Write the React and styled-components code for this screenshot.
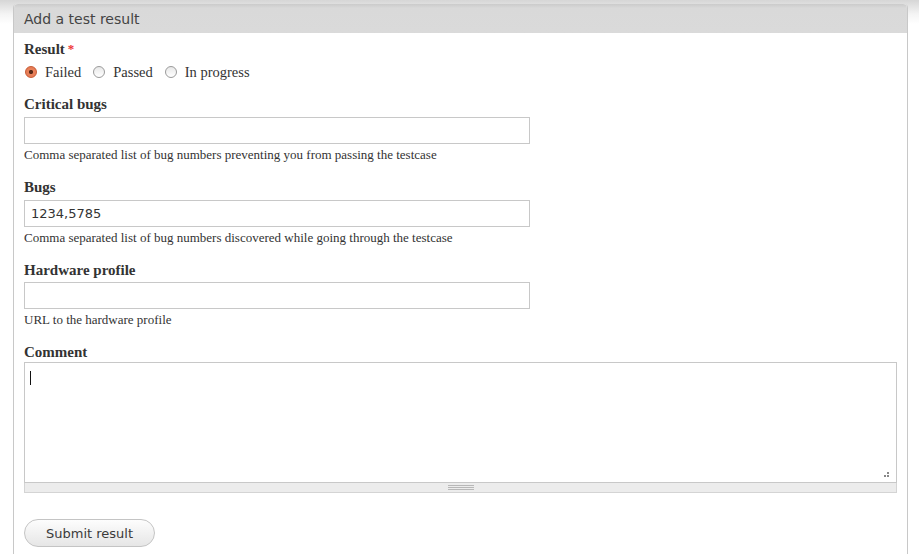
import styled, { createGlobalStyle } from 'styled-components'

const GlobalStyle = createGlobalStyle`
  html, body {
    margin: 0;
    padding: 0;
  }
  body {
    background: linear-gradient(#d6d6d6 0, #f4f4f4 14px, #fff 24px);
    background-repeat: no-repeat;
    background-color: #fff;
    font-family: "Liberation Serif", serif;
    color: #333;
    height: 554px;
    overflow: hidden;
  }
`

const Page = styled.div`
  padding: 4px 0 0 13px;
`

const Panel = styled.div`
  width: 893px;
  border: 1px solid #c8c8c8;
  border-bottom: none;
  border-top: none;
  border-radius: 4px 4px 0 0;
  background: #fff;
  min-height: 560px;
`

const PanelHeader = styled.div`
  height: 29px;
  background: linear-gradient(#cbcbcb 0, #d9d9d9 4px, #dadada 100%);
  border-radius: 4px 4px 0 0;
  padding: 0 10px;
  display: flex;
  align-items: center;
  font-family: "DejaVu Sans", Verdana, sans-serif;
  font-size: 14px;
  color: #444;
`

const Body = styled.div`
  padding: 7px 10px 0 10px;
`

const Item = styled.div`
  margin-bottom: ${p => p.$gap ?? 15}px;
`

const Label = styled.label`
  display: block;
  font-weight: bold;
  font-size: 15px;
  line-height: 18px;
  color: #333;
  margin-bottom: ${p => p.$mb ?? 4}px;
`

const Required = styled.span`
  color: #e33;
  margin-left: 3px;
  font-size: 13px;
  vertical-align: top;
`

const RadioRow = styled.div`
  display: flex;
  align-items: center;
  height: 18px;
  font-size: 14.5px;
`

const RadioOption = styled.span`
  display: flex;
  align-items: center;
  margin-right: 11px;
`

const RadioDot = styled.span`
  width: 12px;
  height: 12px;
  border-radius: 50%;
  margin: 0 8px 0 1px;
  box-sizing: border-box;
  border: 1px solid ${p => (p.$checked ? '#c85a32' : '#9a9a9a')};
  background: ${p =>
    p.$checked
      ? 'radial-gradient(circle, #5a2a18 0, #5a2a18 1.7px, #e9825b 2.5px, #e07550 100%)'
      : 'linear-gradient(#e8e8e8, #fff)'};
`

const TextInput = styled.input`
  display: block;
  box-sizing: border-box;
  width: 506px;
  height: 27px;
  border: 1px solid #c8c8c8;
  padding: 0 6px;
  font-family: "DejaVu Sans", Verdana, sans-serif;
  font-size: 13px;
  color: #333;
  outline: none;
  margin: 0;
`

const Description = styled.div`
  font-size: 13px;
  line-height: 17px;
  color: #333;
  margin-top: 2px;
`

const AreaWrap = styled.div`
  position: relative;
  width: 873px;
`

const TextArea = styled.textarea`
  display: block;
  box-sizing: border-box;
  width: 873px;
  height: 121px;
  border: 1px solid #c8c8c8;
  margin: 0;
  padding: 6px;
  resize: none;
  outline: none;
  font-family: "DejaVu Sans", Verdana, sans-serif;
  font-size: 13px;
  color: #333;
  background: #fff;
`

const Caret = styled.span`
  position: absolute;
  left: 6px;
  top: 9px;
  width: 1px;
  height: 14px;
  background: #111;
`

const ResizeDots = styled.span`
  position: absolute;
  right: 8px;
  bottom: 6px;
  width: 5px;
  height: 5px;
  background:
    radial-gradient(circle, #888 0.8px, transparent 1px) 3px 0 / 2px 2px no-repeat,
    radial-gradient(circle, #888 0.8px, transparent 1px) 0 3px / 2px 2px no-repeat,
    radial-gradient(circle, #888 0.8px, transparent 1px) 3px 3px / 2px 2px no-repeat;
`

const Grippie = styled.div`
  box-sizing: border-box;
  width: 873px;
  height: 10px;
  background: #ececec;
  border: 1px solid #d4d4d4;
  border-top: none;
  display: flex;
  justify-content: center;
  align-items: center;
`

const GripLines = styled.span`
  width: 26px;
  height: 5px;
  border-top: 1px solid #b8b8b8;
  border-bottom: 1px solid #b8b8b8;
  box-sizing: border-box;
  position: relative;

  &::after {
    content: '';
    position: absolute;
    left: 0;
    right: 0;
    top: 1px;
    border-top: 1px solid #b8b8b8;
  }
`

const Actions = styled.div`
  padding-top: 26px;
  display: flex;
`

const Button = styled.button`
  width: 131px;
  height: 28px;
  border-radius: 14px;
  border: 1px solid #c4c4c4;
  background: linear-gradient(#fdfdfd, #e6e6e6);
  font-family: "DejaVu Sans", Verdana, sans-serif;
  font-size: 13px;
  color: #3a3a3a;
  cursor: pointer;
  padding: 0;
`

const fields = [
  { label: 'Critical bugs', value: '', help: 'Comma separated list of bug numbers preventing you from passing the testcase' },
  { label: 'Bugs', value: '1234,5785', help: 'Comma separated list of bug numbers discovered while going through the testcase' },
  { label: 'Hardware profile', value: '', help: 'URL to the hardware profile' },
]

export default function App() {
  return (
    <>
      <GlobalStyle />
      <Page>
        <Panel>
          <PanelHeader>Add a test result</PanelHeader>
          <Body>
            <Item $gap={14}>
              <Label $mb={5}>
                Result<Required>*</Required>
              </Label>
              <RadioRow>
                <RadioOption>
                  <RadioDot $checked />
                  Failed
                </RadioOption>
                <RadioOption>
                  <RadioDot />
                  Passed
                </RadioOption>
                <RadioOption>
                  <RadioDot />
                  In progress
                </RadioOption>
              </RadioRow>
            </Item>
            {fields.map((f, i) => (
              <Item key={f.label} $gap={15}>
                <Label $mb={i === 2 ? 3 : 4}>{f.label}</Label>
                <TextInput type="text" defaultValue={f.value} />
                <Description>{f.help}</Description>
              </Item>
            ))}
            <Item $gap={0}>
              <Label $mb={1}>Comment</Label>
              <AreaWrap>
                <TextArea />
                <Caret />
                <ResizeDots />
              </AreaWrap>
              <Grippie>
                <GripLines />
              </Grippie>
            </Item>
            <Actions>
              <Button>Submit result</Button>
            </Actions>
          </Body>
        </Panel>
      </Page>
    </>
  )
}
